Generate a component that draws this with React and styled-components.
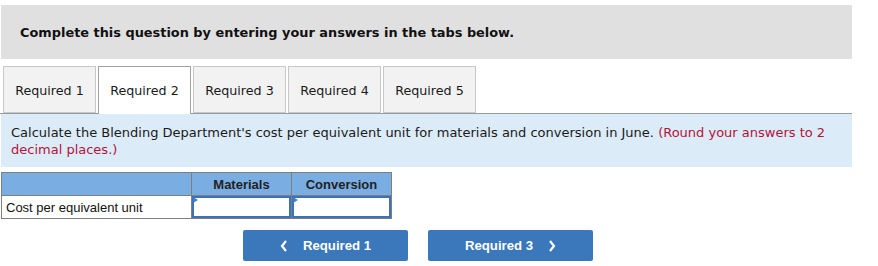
import React from "react";
import styled, { createGlobalStyle } from "styled-components";

const Global = createGlobalStyle`
  html, body { margin: 0; padding: 0; background: #fff; }
  body { font-family: "DejaVu Sans", Verdana, sans-serif; color: #000; }
`;

const Page = styled.div`
  width: 852px;
  padding: 5px 0 0 0;
`;

const Banner = styled.div`
  margin-left: 1px;
  height: 54px;
  background: #e0e0e0;
  display: flex;
  align-items: center;
  padding-left: 19px;
  box-sizing: border-box;
  font-weight: bold;
  font-size: 12.9px;
  color: #111;
`;

const TabBar = styled.div`
  margin-top: 7px;
  display: flex;
  gap: 2px;
  padding-left: 3px;
  border-bottom: 1px solid #9a9a9a;
  height: 47px;
  align-items: flex-start;
`;

const Tab = styled.div`
  width: 93px;
  box-sizing: border-box;
  border: 1px solid ${(p) => (p.$active ? "#a0a0a0" : "#c8c8c8")};
  border-bottom: ${(p) => (p.$active ? "none" : "1px solid #c8c8c8")};
  background: ${(p) => (p.$active ? "#fff" : "#f2f2f2")};
  height: ${(p) => (p.$active ? "48px" : "47px")};
  padding-top: 1px;
  padding-bottom: ${(p) => (p.$active ? "2px" : "0")};
  position: relative;
  z-index: ${(p) => (p.$active ? 1 : 0)};
  display: flex;
  align-items: center;
  justify-content: center;
  font-size: 12.7px;
  color: #1a1a1a;
`;

const Instructions = styled.div`
  margin-left: 1px;
  background: #dcebf8;
  padding: 10px 10px 9px 10px;
  font-size: 13px;
  line-height: 17px;
  color: #1a1a1a;
  min-height: 52px;
  box-sizing: border-box;
`;

const Red = styled.span`
  color: #b5123a;
`;

const Table = styled.table`
  margin: 5px 0 0 1px;
  border-collapse: collapse;
  font-family: "Liberation Sans", Arial, sans-serif;
  font-size: 13px;
`;

const Th = styled.th`
  background: #7aaee3;
  border: 1px solid #7f7f7f;
  height: 22px;
  width: ${(p) => p.$w}px;
  padding: 0;
  font-weight: bold;
  color: #222;
  text-align: center;
`;

const Td = styled.td`
  border: 1px solid #7f7f7f;
  height: 22px;
  padding: 0 4px;
  color: #111;
  text-align: left;
`;

const InputCell = styled.td`
  border: 1px solid #7f7f7f;
  padding: 0;
  height: 22px;
`;

const InputBox = styled.div`
  position: relative;
  height: 22px;
  box-sizing: border-box;
  border: 2px solid #3c72b8;
  background: #fff;
  &::before {
    content: "";
    position: absolute;
    left: -1px;
    top: -1px;
    border-style: solid;
    border-width: 3px 0 3px 5px;
    border-color: transparent transparent transparent #3c7fd0;
  }
`;

const Buttons = styled.div`
  display: flex;
  gap: 20px;
  margin: 11px 0 0 243px;
`;

const NavButton = styled.button`
  width: 165px;
  height: 31px;
  border: none;
  border-radius: 2px;
  background: #3a77bb;
  color: #fff;
  font-family: "Liberation Sans", Arial, sans-serif;
  font-weight: bold;
  font-size: 13.2px;
  display: flex;
  align-items: center;
  justify-content: center;
  gap: 15px;
  padding: 0;
`;

const Chevron = ({ dir }) => (
  <svg width="8" height="12" viewBox="0 0 8 12">
    <path
      d={dir === "left" ? "M6 1 L2 6 L6 11" : "M2 1 L6 6 L2 11"}
      stroke="#fff"
      strokeWidth="2.2"
      fill="none"
    />
  </svg>
);

export default function App() {
  const tabs = ["Required 1", "Required 2", "Required 3", "Required 4", "Required 5"];
  return (
    <Page>
      <Global />
      <Banner>Complete this question by entering your answers in the tabs below.</Banner>
      <TabBar>
        {tabs.map((t, i) => (
          <Tab key={t} $active={i === 1}>
            {t}
          </Tab>
        ))}
      </TabBar>
      <Instructions>
        Calculate the Blending Department's cost per equivalent unit for materials and
        conversion in June. <Red>(Round your answers to 2 decimal places.)</Red>
      </Instructions>
      <Table>
        <thead>
          <tr>
            <Th $w={189}></Th>
            <Th $w={99}>Materials</Th>
            <Th $w={99}>Conversion</Th>
          </tr>
        </thead>
        <tbody>
          <tr>
            <Td>Cost per equivalent unit</Td>
            <InputCell>
              <InputBox />
            </InputCell>
            <InputCell>
              <InputBox />
            </InputCell>
          </tr>
        </tbody>
      </Table>
      <Buttons>
        <NavButton>
          <Chevron dir="left" />
          Required 1
        </NavButton>
        <NavButton>
          Required 3
          <Chevron dir="right" />
        </NavButton>
      </Buttons>
    </Page>
  );
}
